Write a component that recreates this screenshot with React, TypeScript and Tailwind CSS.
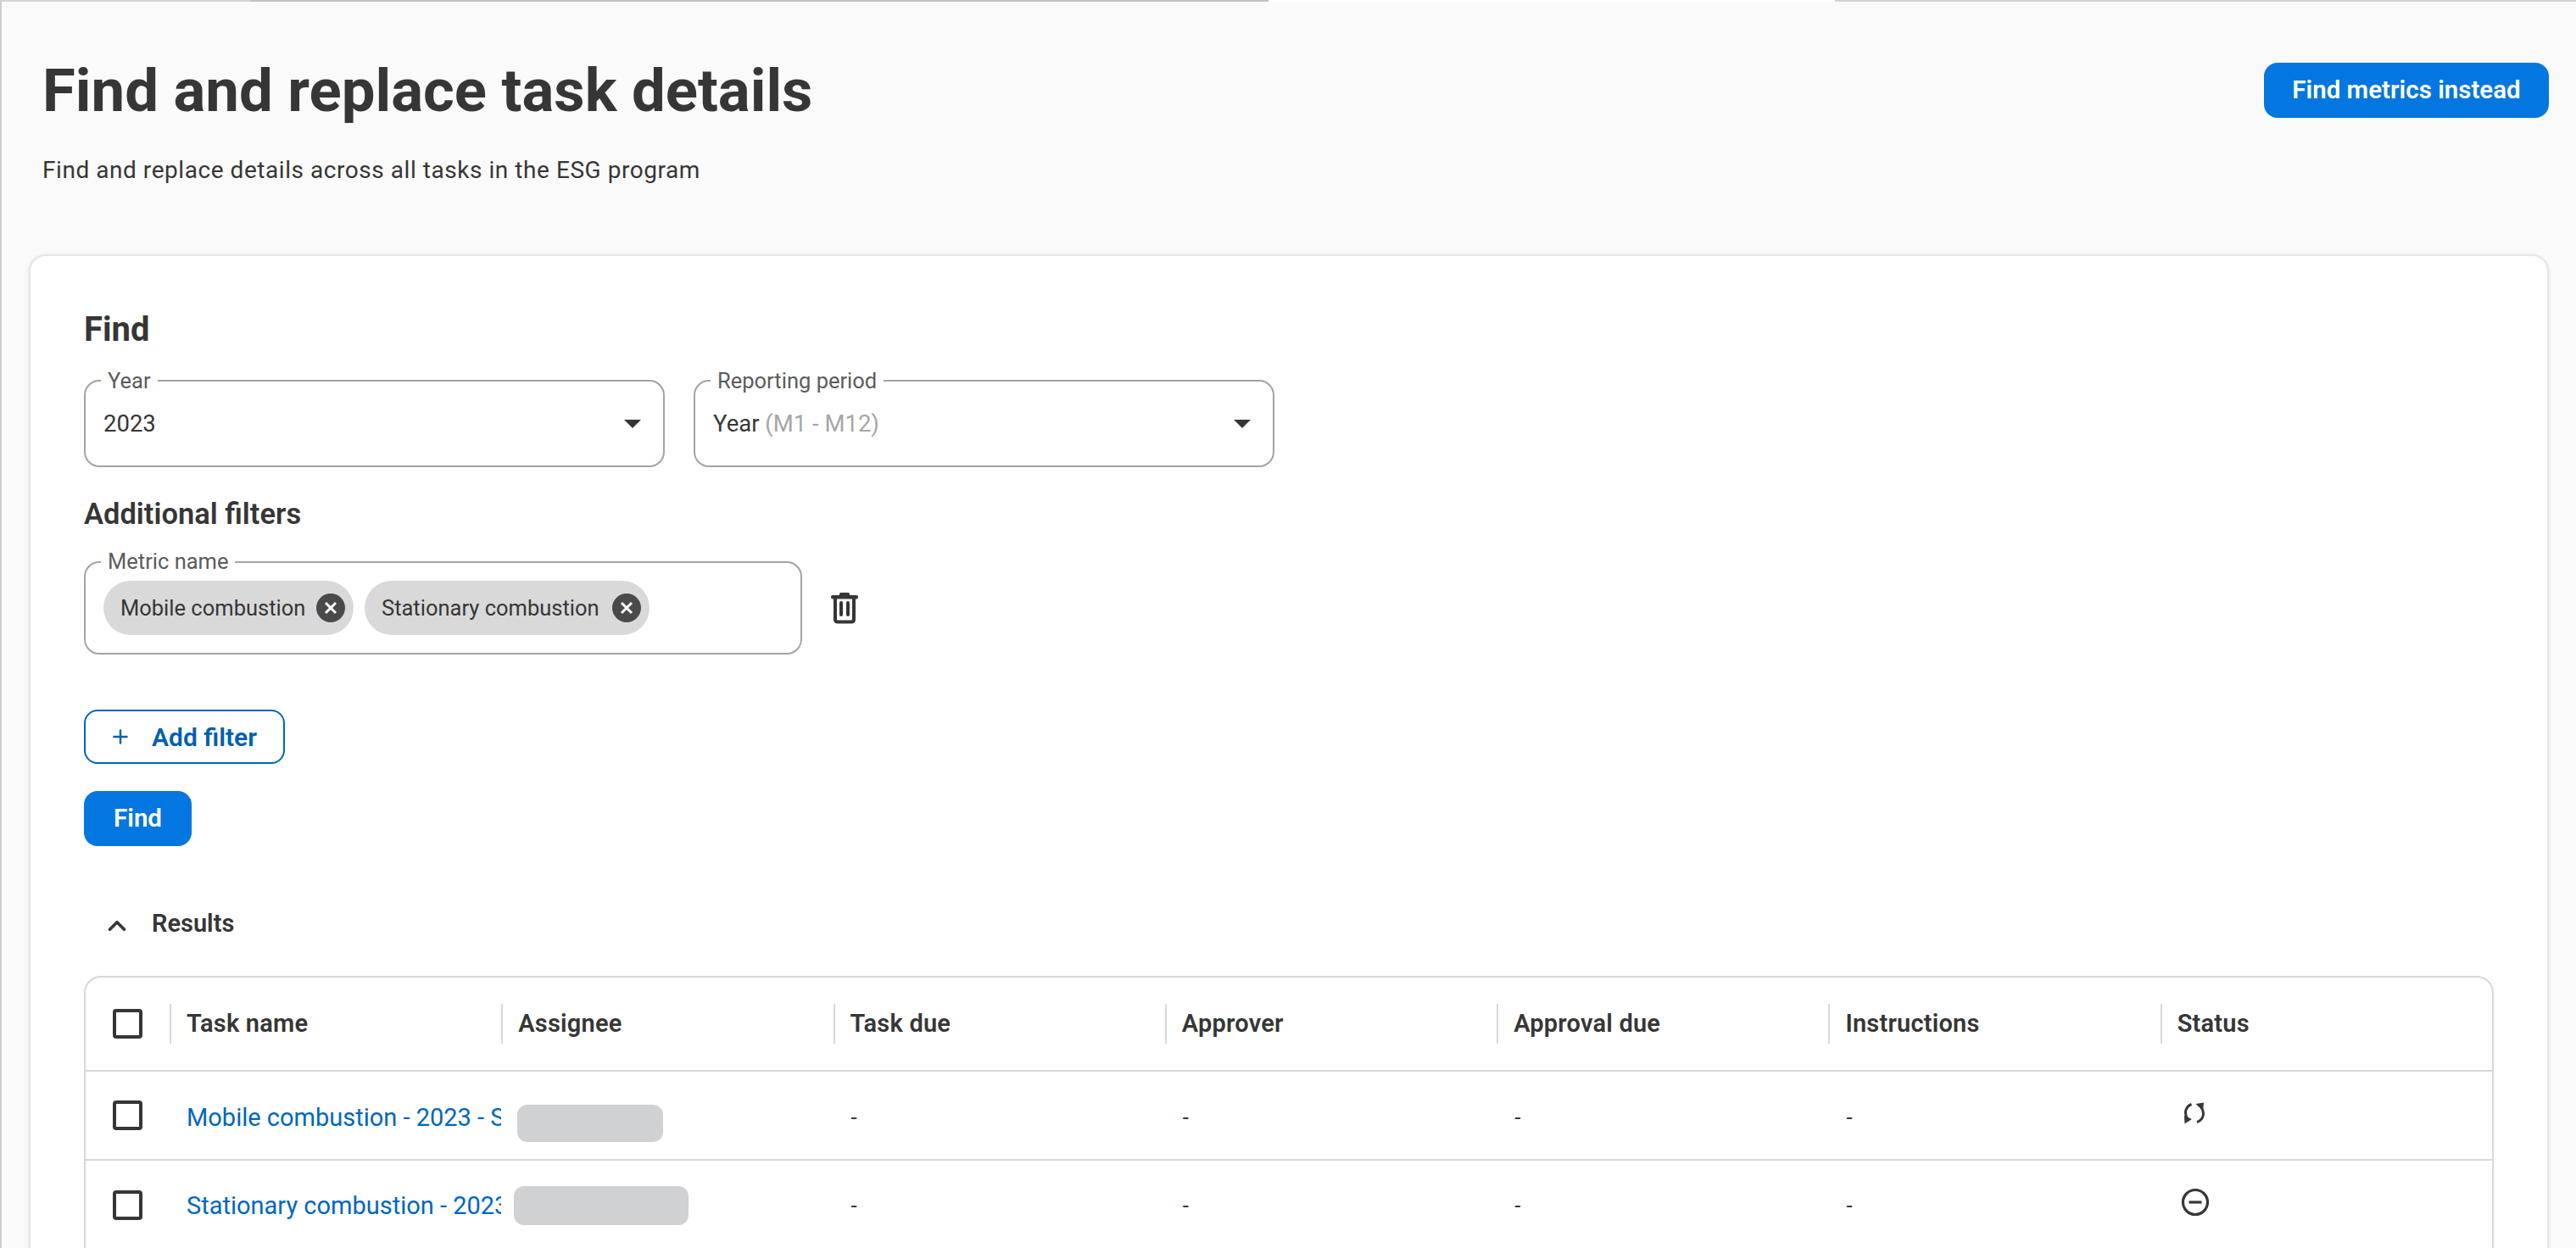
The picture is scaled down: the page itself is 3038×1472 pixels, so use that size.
import React from 'react';
import { Plus, ChevronUp } from 'lucide-react';

const font = "font-['Roboto',sans-serif]";

const SyncIcon = () => (
  <svg width="26" height="26" viewBox="0 0 26 26" fill="none">
    <path d="M9.5 2.5C3 5 0 12.5 5 20" stroke="#363636" strokeWidth="3" />
    <path d="M1 16L10 20L1.5 25.5Z" fill="#363636" />
    <path d="M16 23.5C23 21 26 13.5 21 6" stroke="#363636" strokeWidth="3" />
    <path d="M14.5 2L24 0.5L23 10Z" fill="#363636" />
  </svg>
);

const MinusCircle = () => (
  <svg width="34" height="34" viewBox="0 0 34 34" fill="none">
    <circle cx="17" cy="17" r="14.5" stroke="#363636" strokeWidth="3.2" />
    <path d="M9.5 17H24.5" stroke="#363636" strokeWidth="3.2" />
  </svg>
);

const TrashIcon = () => (
  <svg width="32" height="38" viewBox="0 0 32 38" fill="none">
    <rect x="10" y="1" width="12" height="5" rx="1.5" fill="#363636" />
    <rect x="0" y="4" width="32" height="4.5" rx="2" fill="#363636" />
    <path d="M5 8V32.5Q5 35.5 8 35.5H24Q27 35.5 27 32.5V8" stroke="#363636" strokeWidth="4" />
    <path d="M12 13V27M20 13V27" stroke="#363636" strokeWidth="4" strokeLinecap="round" />
  </svg>
);

const Chip = ({ label, width }: { label: string; width: string }) => (
  <div className={`flex h-[64px] items-center justify-between rounded-full bg-[#d9d9d9] pl-[20px] pr-[10px] ${width}`}>
    <span className="text-[25.5px] text-[#363636]">{label}</span>
    <svg width="34" height="34" viewBox="0 0 34 34">
      <circle cx="17" cy="17" r="17" fill="#4a4a4a" />
      <path d="M11 11L23 23M23 11L11 23" stroke="#fff" strokeWidth="3" />
    </svg>
  </div>
);

const SelectField = ({ label, children }: { label: string; children: React.ReactNode }) => (
  <div className="relative flex h-[103px] w-[685px] items-center justify-between rounded-[18px] border-2 border-[#a3a3a3] bg-white pl-[21px] pr-[26px]">
    <span className="absolute -top-[16px] left-[18px] bg-white px-[8px] text-[25.5px] leading-[30px] text-[#5c5c5c]">{label}</span>
    <span className="text-[27.5px] text-[#363636]">{children}</span>
    <svg width="20" height="10" viewBox="0 0 20 10"><path d="M0 0H20L10 10Z" fill="#363636" /></svg>
  </div>
);

const Checkbox = () => <div className="h-[35px] w-[35px] rounded-[4px] border-[4px] border-[#363636]" />;

const columns = ['Task name', 'Assignee', 'Task due', 'Approver', 'Approval due', 'Instructions', 'Status'];

const Dash = ({ shift }: { shift: string }) => <span className={`pl-[21px] text-[26px] text-[#363636] ${shift}`}>-</span>;

const Row = ({ name, redact, icon, shift, last }: { name: string; redact: string; icon: React.ReactNode; shift: string; last?: boolean }) => (
  <div className={`grid h-[105px] grid-cols-[99px_repeat(7,1fr)] items-center ${last ? '' : 'border-b-2 border-[#d8d8d8]'}`}>
    <div className="flex justify-center"><Checkbox /></div>
    <div className={`overflow-hidden whitespace-nowrap pl-[20px] text-[29px] text-[#0066c0] ${shift}`}>{name}</div>
    <div className={redact} />
    <Dash shift={shift} />
    <Dash shift={shift} />
    <Dash shift={shift} />
    <Dash shift={shift} />
    {icon}
  </div>
);

export default function App() {
  return (
    <div className={`h-[1472px] overflow-hidden border-l-2 border-[#cfcfcf] bg-[#fafafa] ${font}`}>
      {/* top strip */}
      <div className="flex h-[2px]">
        <div className="w-[293px] bg-[#d4d4d4]" />
        <div className="w-[1201px] bg-[#c2c2c2]" />
        <div className="w-[668px] bg-white" />
        <div className="flex-1 bg-[#d2d2d2]" />
      </div>

      {/* Header */}
      <div className="flex items-start justify-between pl-[48px] pr-[32px]">
        <div>
          <h1 className="mt-[60px] text-[70.7px] font-bold leading-[90px] text-[#363636]">Find and replace task details</h1>
          <p className="mt-[29px] text-[28px] leading-[40px] tracking-[0.55px] text-[#363636]">Find and replace details across all tasks in the ESG program</p>
        </div>
        <button className="mt-[72px] h-[65px] w-[336px] rounded-[16px] bg-[#0476df] text-[29.5px] font-semibold text-white">Find metrics instead</button>
      </div>

      {/* Card */}
      <div className="mt-[79px] ml-[32px] mr-[32px] h-[1300px] rounded-[20px] border-2 border-[#e6e6ea] bg-white px-[63px] pt-[63px] shadow-[0_1px_4px_rgba(60,60,90,0.12)]">
        <h2 className="text-[40px] font-bold leading-[48px] text-[#363636]">Find</h2>

        <div className="mt-[35px] flex gap-[34px]">
          <SelectField label="Year">2023</SelectField>
          <SelectField label="Reporting period">Year <span className="text-[#a6a6a6]">(M1 - M12)</span></SelectField>
        </div>

        <h3 className="mt-[35px] text-[34.5px] font-semibold leading-[40px] text-[#363636]">Additional filters</h3>

        <div className="mt-[36px] flex items-center gap-[34px]">
          <div className="relative flex h-[110px] w-[847px] items-center gap-[13px] rounded-[18px] border-2 border-[#a3a3a3] pl-[21px]">
            <span className="absolute -top-[17px] left-[18px] bg-white px-[8px] text-[25.5px] leading-[30px] text-[#5c5c5c]">Metric name</span>
            <Chip label="Mobile combustion" width="w-[295px]" />
            <Chip label="Stationary combustion" width="w-[336px]" />
          </div>
          <TrashIcon />
        </div>

        <button className="mt-[65px] flex h-[64px] w-[237px] items-center rounded-[16px] border-2 border-[#0066b8] pl-[28px] text-[30px] font-semibold text-[#0060b0]">
          <Plus size={26} strokeWidth={2.2} />
          <span className="ml-[24px]">Add filter</span>
        </button>

        <button className="mt-[32px] block h-[65px] w-[127px] rounded-[16px] bg-[#0476df] text-[29.5px] font-semibold text-white">Find</button>

        {/* Results */}
        <div className="mt-[72px] flex h-[40px] items-center">
          <ChevronUp size={34} strokeWidth={2.6} className="mt-[4px] ml-[22px] text-[#363636]" />
          <span className="ml-[24px] text-[29px] font-semibold text-[#363636]">Results</span>
        </div>

        <div className="mt-[41px] h-[400px] rounded-t-[20px] border-2 border-[#d8d8d8]">
          <div className="grid h-[111px] grid-cols-[99px_repeat(7,1fr)] items-center border-b-2 border-[#d8d8d8]">
            <div className="flex justify-center"><Checkbox /></div>
            {columns.map((c) => (
              <div key={c} className="flex h-[47px] items-center border-l-2 border-[#d8d8d8] pl-[18px] text-[29px] font-semibold tracking-[0.2px] text-[#363636]">{c}</div>
            ))}
          </div>
          <Row
            shift="mt-[6px]"
            name="Mobile combustion - 2023 - Scope 1"
            redact="ml-[19px] mt-[18px] h-[44px] w-[172px] rounded-[12px] bg-[#d0d1d3]"
            icon={<div className="mb-[6px] pl-[27px]"><SyncIcon /></div>}
          />
          <Row
            last
            shift="mt-[2px]"
            name="Stationary combustion - 2023 - Scope 1"
            redact="ml-[15px] h-[46px] w-[206px] rounded-[12px] bg-[#d0d1d3]"
            icon={<div className="mb-[8px] pl-[24px]"><MinusCircle /></div>}
          />
        </div>
      </div>
    </div>
  );
}
